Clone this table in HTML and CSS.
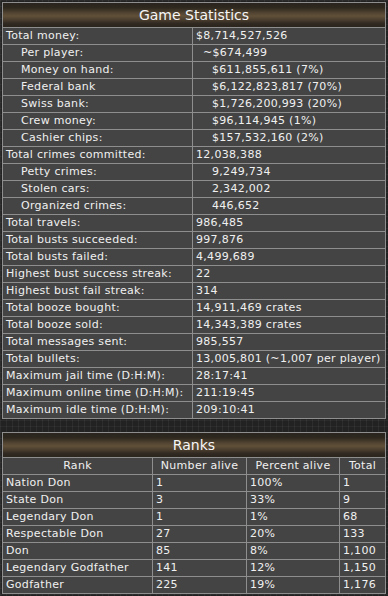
FILE: index.html
```html
<!DOCTYPE html>
<html>
<head>
<meta charset="utf-8">
<title>Game Statistics</title>
<link rel="stylesheet" href="styles.css">
</head>
<body>
<div class="page">
<table class="stats">
  <colgroup><col class="c-label"><col></colgroup>
  <tr><th colspan="2" class="title">Game Statistics</th></tr>
  <tr><td>Total money:</td><td>$8,714,527,526</td></tr>
  <tr><td class="sub">Per player:</td><td class="v-half">~$674,499</td></tr>
  <tr><td class="sub">Money on hand:</td><td class="v-sub">$611,855,611 (7%)</td></tr>
  <tr><td class="sub">Federal bank</td><td class="v-sub">$6,122,823,817 (70%)</td></tr>
  <tr><td class="sub">Swiss bank:</td><td class="v-sub">$1,726,200,993 (20%)</td></tr>
  <tr><td class="sub">Crew money:</td><td class="v-sub">$96,114,945 (1%)</td></tr>
  <tr><td class="sub">Cashier chips:</td><td class="v-sub">$157,532,160 (2%)</td></tr>
  <tr><td>Total crimes committed:</td><td>12,038,388</td></tr>
  <tr><td class="sub">Petty crimes:</td><td class="v-sub">9,249,734</td></tr>
  <tr><td class="sub">Stolen cars:</td><td class="v-sub">2,342,002</td></tr>
  <tr><td class="sub">Organized crimes:</td><td class="v-sub">446,652</td></tr>
  <tr><td>Total travels:</td><td>986,485</td></tr>
  <tr><td>Total busts succeeded:</td><td>997,876</td></tr>
  <tr><td>Total busts failed:</td><td>4,499,689</td></tr>
  <tr><td>Highest bust success streak:</td><td>22</td></tr>
  <tr><td>Highest bust fail streak:</td><td>314</td></tr>
  <tr><td>Total booze bought:</td><td>14,911,469 crates</td></tr>
  <tr><td>Total booze sold:</td><td>14,343,389 crates</td></tr>
  <tr><td>Total messages sent:</td><td>985,557</td></tr>
  <tr><td>Total bullets:</td><td>13,005,801 (~1,007 per player)</td></tr>
  <tr><td>Maximum jail time (D:H:M):</td><td>28:17:41</td></tr>
  <tr><td>Maximum online time (D:H:M):</td><td>211:19:45</td></tr>
  <tr><td>Maximum idle time (D:H:M):</td><td>209:10:41</td></tr>
</table>

<table class="stats ranks">
  <colgroup><col class="r1"><col class="r2"><col class="r3"><col></colgroup>
  <tr><th colspan="4" class="title">Ranks</th></tr>
  <tr class="head"><td>Rank</td><td>Number alive</td><td>Percent alive</td><td>Total</td></tr>
  <tr><td>Nation Don</td><td>1</td><td>100%</td><td>1</td></tr>
  <tr><td>State Don</td><td>3</td><td>33%</td><td>9</td></tr>
  <tr><td>Legendary Don</td><td>1</td><td>1%</td><td>68</td></tr>
  <tr><td>Respectable Don</td><td>27</td><td>20%</td><td>133</td></tr>
  <tr><td>Don</td><td>85</td><td>8%</td><td>1,100</td></tr>
  <tr><td>Legendary Godfather</td><td>141</td><td>12%</td><td>1,150</td></tr>
  <tr><td>Godfather</td><td>225</td><td>19%</td><td>1,176</td></tr>
</table>
</div>
</body>
</html>
```
FILE: styles.css
```css
html, body {
  margin: 0;
  padding: 0;
  background-color: #222;
  background-image:
    linear-gradient(to right, rgba(255,255,255,0.05) 1px, transparent 1px),
    linear-gradient(to bottom, rgba(255,255,255,0.04) 1px, transparent 1px);
  background-size: 6px 6px;
}

.page {
  padding: 2px 2px 0 2px;
  font-family: "DejaVu Sans", Verdana, sans-serif;
  font-size: 11px;
  color: #f0f0f0;
}

.stats {
  width: 384px;
  border-collapse: collapse;
  table-layout: fixed;
  background: #444;
}

.stats + .stats {
  margin-top: 13px;
}

.stats td, .stats th {
  border: 1px solid #8e8e8e;
  height: 16px;
  padding: 0 3px;
  line-height: 16px;
  white-space: nowrap;
  overflow: hidden;
  text-align: left;
  font-weight: normal;
  letter-spacing: 0.3px;
}

.c-label { width: 190px; }

.stats th.title {
  height: 24px;
  padding: 0;
  text-align: center;
  font-size: 14px;
  letter-spacing: 0;
  color: #f6f6f6;
  background:
    linear-gradient(to bottom, #29241d 0%, #2e281f 18%, #4d402f 36%, #615039 52%, #4d402f 66%, #2f2921 84%, #29241d 100%);
}

.stats td.sub { padding-left: 18px; }
.stats td.v-half { padding-left: 10px; }
.stats td.v-sub { padding-left: 19px; }

.r1 { width: 150px; }
.r2 { width: 94px; }
.r3 { width: 93px; }

.ranks tr.head td {
  text-align: center;
}
```
